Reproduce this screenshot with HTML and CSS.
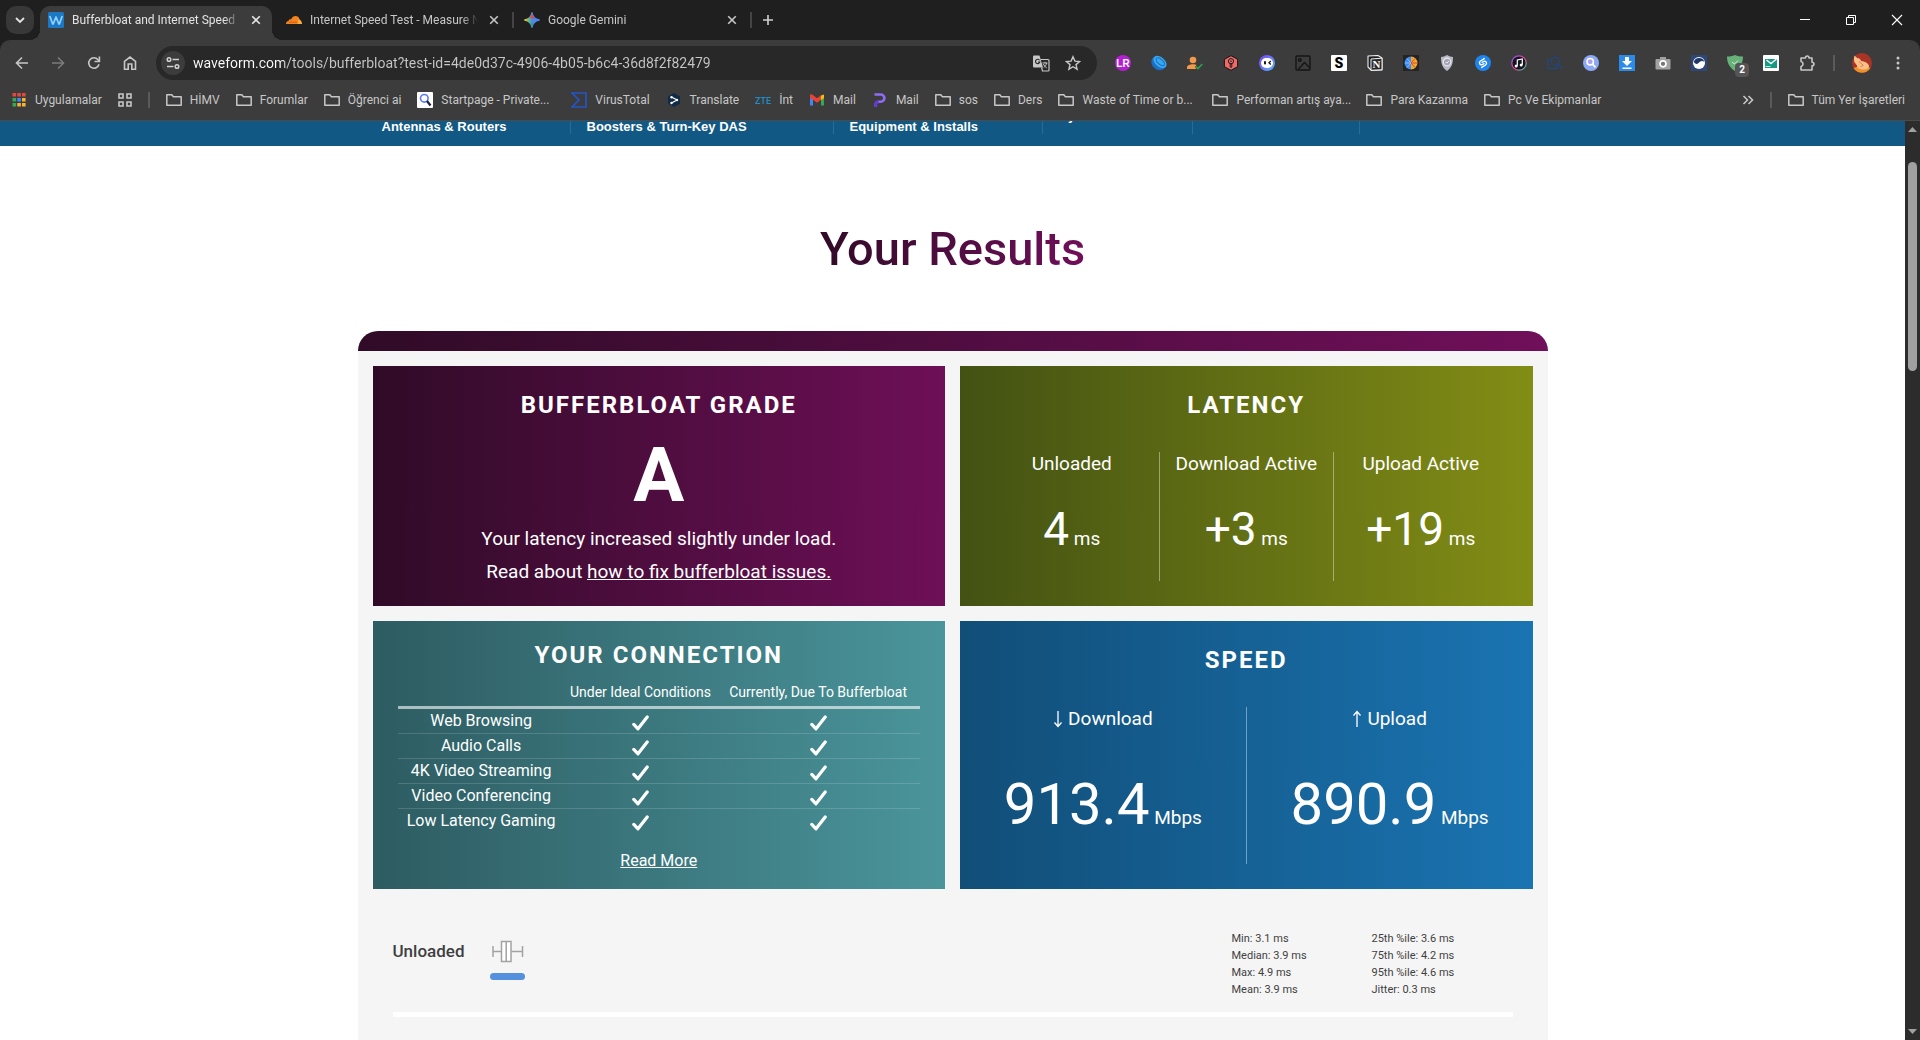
FILE: index.html
```
<!DOCTYPE html>
<html lang="tr">
<head>
<meta charset="utf-8">
<meta name="viewport" content="width=device-width, initial-scale=1">
<title>Bufferbloat and Internet Speed Test</title>
<link rel="stylesheet" href="styles.css">
</head>
<body>
<svg class="symbols" aria-hidden="true">
  <symbol id="folder" viewBox="0 0 16 16"><path d="M.8 13.2V2.8h5l1.6 2h7.8v8.4z" fill="none" stroke="#c7c7c7" stroke-width="1.5" stroke-linejoin="round"/></symbol>
  <symbol id="close" viewBox="0 0 16 16"><path d="M4.2 4.2l7.6 7.6M11.8 4.2l-7.6 7.6" fill="none" stroke="currentColor" stroke-width="1.6"/></symbol>
  <symbol id="check" viewBox="0 0 17 16"><path d="M1.8 9.4l4.2 4.4L15.2 2" fill="none" stroke="#fff" stroke-width="3.2" stroke-linecap="round" stroke-linejoin="round"/></symbol>
</svg>

<header class="browser">
  <div class="tabstrip">
    <button class="tab-search" aria-label="Sekme ara"><svg width="16" height="16" viewBox="0 0 16 16"><path d="M4 6l4 4 4-4" fill="none" stroke="#e3e3e3" stroke-width="1.8"/></svg></button>
    <div class="tab tab-active">
      <svg width="16" height="16" viewBox="0 0 16 16"><rect width="16" height="16" rx="1.5" fill="#1d78c4"/><path d="M1.8 4l2.9 8h.5L8 5l2.9 7h.5l2.8-8" fill="none" stroke="#8fd0ff" stroke-width="1.7" stroke-linejoin="round"/></svg>
      <span class="tab-title">Bufferbloat and Internet Speed</span>
      <button class="tab-close" aria-label="Kapat"><svg width="16" height="16"><use href="#close"/></svg></button>
    </div>
    <span class="tab-sep tab-sep-hidden"></span>
    <div class="tab">
      <svg width="16" height="16" viewBox="0 0 16 16"><path d="M0 12c0-1.7 1-2.8 2.5-2.9C2.700 7.600 4 7 5 7.500 6 5 7.800 4 9.600 4c2.200 0 3.600 1.500 4 3.400L12 12z" fill="#f58220"/><path d="M12.200 7.600c2.200-.2 3.800 1.700 3.800 4.400h-4.600z" fill="#fbad41"/><path d="M3 10.200h8.500" stroke="#b8560c" stroke-width=".7"/></svg>
      <span class="tab-title">Internet Speed Test - Measure N</span>
      <button class="tab-close" aria-label="Kapat"><svg width="16" height="16"><use href="#close"/></svg></button>
    </div>
    <span class="tab-sep"></span>
    <div class="tab">
      <svg width="16" height="16" viewBox="0 0 16 16"><defs><linearGradient id="gem" x1="0" x2="1"><stop offset="0" stop-color="#f6c137"/><stop offset=".3" stop-color="#5fb58a"/><stop offset=".5" stop-color="#4a87ee"/><stop offset="1" stop-color="#4a87f5"/></linearGradient></defs><path d="M8 .8C8.700 5 11 7.300 15.200 8 11 8.700 8.700 11 8 15.200 7.300 11 5 8.700.8 8 5 7.300 7.300 5 8 .8z" fill="url(#gem)" stroke="url(#gem)" stroke-width="1.400" stroke-linejoin="round"/><path d="M8 .8C8.600 4.500 9.700 5.700 11.600 6.900L5.500 5.800C7 4.900 7.600 3.500 8 .8z" fill="#e9453a"/><path d="M6 10.300c1 1 1.600 2.300 2 4.900l1-3.700z" fill="#2fa65a"/></svg>
      <span class="tab-title">Google Gemini</span>
      <button class="tab-close" aria-label="Kapat"><svg width="16" height="16"><use href="#close"/></svg></button>
    </div>
    <span class="tab-sep"></span>
    <button class="new-tab" aria-label="Yeni sekme"><svg width="16" height="16" viewBox="0 0 16 16"><path d="M8 3v10M3 8h10" stroke="#d0d0d0" stroke-width="1.600"/></svg></button>
    <div class="window-controls">
      <button aria-label="Simge durumuna küçült"><svg width="12" height="12" viewBox="0 0 12 12"><path d="M1 5.500h10" stroke="#fff"/></svg></button>
      <button aria-label="Aşağı geri getir"><svg width="12" height="12" viewBox="0 0 12 12" fill="none" stroke="#fff"><path d="M1.500 3.500h7v7h-7zM3.500 3V1.500h7v7H9"/></svg></button>
      <button aria-label="Pencereyi kapat"><svg width="12" height="12" viewBox="0 0 12 12"><path d="M1 1l10 10M11 1L1 11" stroke="#fff" stroke-width="1.100"/></svg></button>
    </div>
  </div>

  <div class="toolbar">
    <button class="nav-button" aria-label="Geri"><svg width="16" height="16" viewBox="0 0 16 16"><path d="M14 8H3M8 2.500L2.500 8 8 13.500" fill="none" stroke="#c7c7c7" stroke-width="1.600"/></svg></button>
    <button class="nav-button" aria-label="İleri"><svg width="16" height="16" viewBox="0 0 16 16"><path d="M2 8h11M8 2.500L13.500 8 8 13.500" fill="none" stroke="#7b7b7b" stroke-width="1.600"/></svg></button>
    <button class="nav-button" aria-label="Yenile"><svg width="16" height="16" viewBox="0 0 16 16"><path d="M13 9.200A5.200 5.200 0 1 1 12 4.700l1 1.300" fill="none" stroke="#c7c7c7" stroke-width="1.600"/><path d="M13.400 1.500v5H8.500" fill="none" stroke="#c7c7c7" stroke-width="1.600"/></svg></button>
    <button class="nav-button" aria-label="Ana sayfa"><svg width="16" height="16" viewBox="0 0 16 16"><path d="M2.500 6.300L8 2l5.500 4.300v7.900h-3.700V9H6.200v5.200H2.500z" fill="none" stroke="#c7c7c7" stroke-width="1.600"/></svg></button>
    <form class="omnibox">
      <button class="site-info" type="button" aria-label="Site bilgileri"><svg width="16" height="16" viewBox="0 0 16 16" fill="none" stroke="#d0d0d0" stroke-width="1.500"><circle cx="4" cy="4.500" r="1.800"/><path d="M7.500 4.500H14M2 11.500h6.500"/><circle cx="12" cy="11.500" r="1.800"/></svg></button>
      <input class="url" type="text" aria-label="Adres" value="waveform.com/tools/bufferbloat?test-id=4de0d37c-4906-4b05-b6c4-36d8f2f82479">
      <button class="omni-action" type="button" aria-label="Bu sayfayı çevir"><svg width="17" height="17" viewBox="0 0 17 17"><path d="M0 1.500Q0 .5 1 .5h5.500L10 12.500H1Q0 12.500 0 11.500z" fill="#c7c7c7"/><path d="M7.500 4.500H15q1 0 1 1V15q0 1-1 1H9.500L8.600 12.500" fill="none" stroke="#c7c7c7" stroke-width="1.200"/><path d="M6.600 5.300A2.200 2.200 0 1 0 6.800 7H5" fill="none" stroke="#282828" stroke-width="1.100"/><path d="M9.500 8h5M12 6.800V8M13.700 8c-.5 2-1.700 3.500-3 4.500M10.300 9c.7 1.600 2 3 3.500 4" stroke="#c7c7c7" fill="none"/></svg></button>
      <button class="omni-action" type="button" aria-label="Yer işareti ekle"><svg width="16" height="16" viewBox="0 0 16 16"><path d="M8 1.800l1.900 4.300 4.700.4-3.600 3.100 1.100 4.600L8 11.700l-4.100 2.500L5 9.600 1.400 6.500l4.700-.4z" fill="none" stroke="#c7c7c7" stroke-width="1.400"/></svg></button>
    </form>
    <div class="extensions">
      <button aria-label="LR"><svg width="16" height="16" viewBox="0 0 16 16"><circle cx="8" cy="8" r="8" fill="#b31fd3"/><text x="8" y="12" text-anchor="middle" class="glyph-lr">LR</text></svg></button>
      <button aria-label="Disk"><svg width="16" height="16" viewBox="0 0 16 16"><ellipse cx="7.800" cy="8.600" rx="7.800" ry="6.200" transform="rotate(42 8 8)" fill="#1c6fc4"/><ellipse cx="9" cy="7" rx="7.600" ry="4.800" transform="rotate(42 9 7)" fill="#38a8f0"/><ellipse cx="9.300" cy="6.800" rx="5" ry="2.500" transform="rotate(42 9.300 6.800)" fill="none" stroke="#1c6fc4"/></svg></button>
      <button aria-label="Kişi"><svg width="16" height="16" viewBox="0 0 16 16"><circle cx="6" cy="5" r="3.300" fill="#f29a4a"/><path d="M0 14v-1.500C0 10.500 3 9.300 6 9.300c1.500 0 3 .3 3.500.7L8 12l1.500 2z" fill="#f29a4a"/><path d="M9 11.500l2 2 4.300-4.500" fill="none" stroke="#2ea04e" stroke-width="1.600"/></svg></button>
      <button aria-label="Konum"><svg width="16" height="16" viewBox="0 0 16 16"><path d="M8 .7l6.600 3.600v7.400L8 15.300 1.400 11.700V4.300z" fill="#ef6a64" stroke="#16161d"/><circle cx="8" cy="6.200" r="2.600" fill="none" stroke="#16161d"/><circle cx="8" cy="6.200" r=".8" fill="#16161d"/><path d="M7.200 9h1.600v3.200H7.200z" fill="#ef6a64" stroke="#16161d" stroke-width=".9"/></svg></button>
      <button aria-label="Robot"><svg width="16" height="16" viewBox="0 0 16 16"><defs><linearGradient id="bot" x1="0" x2="1" y1="0" y2="1"><stop offset="0" stop-color="#7b3ff2"/><stop offset="1" stop-color="#5bb8ff"/></linearGradient></defs><circle cx="8" cy="8" r="8" fill="url(#bot)"/><rect x="2" y="3" width="12" height="10" rx="5" fill="#fff"/><rect x="5" y="6" width="2" height="3.500" rx="1" fill="#111"/><path d="M11.800 6L10 7.800l1.800 1.700" fill="none" stroke="#111" stroke-width="1.300"/></svg></button>
      <button aria-label="Resim"><svg width="16" height="16" viewBox="0 0 16 16" fill="none" stroke="#151515" stroke-width="1.400"><rect x="1" y="1" width="14" height="14" rx="1"/><circle cx="4.800" cy="5" r="1.300"/><path d="M3.500 14l6-6.500 5 5"/></svg></button>
      <button aria-label="S"><svg width="16" height="16" viewBox="0 0 16 16"><rect width="16" height="16" rx="1" fill="#fff"/><text x="8" y="13" text-anchor="middle" class="glyph-s">S</text></svg></button>
      <button aria-label="Notion"><svg width="16" height="16" viewBox="0 0 16 16"><path d="M1 1l10-.5L15 3v12l-10.500.5L1 12z" fill="#202020" stroke="#f1f1f1" stroke-width="1.100" stroke-linejoin="round"/><path d="M4 4l11-.8v11.500l-11 .6z" fill="#2a2a2a" stroke="#f1f1f1"/><text x="9.500" y="13" text-anchor="middle" class="glyph-n">N</text></svg></button>
      <button aria-label="Renkler"><svg width="16" height="16" viewBox="0 0 16 16"><rect width="16" height="16" fill="#242424"/><path d="M8 1.500a6.500 6.500 0 0 0 0 13z" fill="#3b8cf0"/><path d="M8 1.500a6.500 6.500 0 0 1 0 13z" fill="#f3a72c"/><path d="M2 8h6M4 3.500l4 4.500-4 4.500" fill="none" stroke="#9bd0ff" stroke-width=".8"/><path d="M8 8h6M12 3.500L8 8l4 4.500" fill="none" stroke="#e04038" stroke-width=".9"/></svg></button>
      <button aria-label="Kalkan"><svg width="16" height="16" viewBox="0 0 16 16"><path d="M8 0c2 1.400 4 1.800 6 2 0 7-1.600 11-6 14C3.600 13 2 9 2 2c2-.2 4-.6 6-2z" fill="#b9bac6"/><circle cx="8" cy="7" r="3.800" fill="#a4a6b4" stroke="#e8e8ef" stroke-width="1.200"/><path d="M6.500 7l1.200 1.200L9.800 6" fill="none" stroke="#efefff"/></svg></button>
      <button aria-label="Shazam"><svg width="16" height="16" viewBox="0 0 16 16"><circle cx="8" cy="8" r="8" fill="#1f85ee"/><path d="M9.300 3.600L5.500 6c-2.200 1.400-.6 4.400 1.600 3.600L9 8.700M6.700 12.400l3.800-2.400c2.200-1.400.6-4.400-1.600-3.600L7 7.300" fill="none" stroke="#fff" stroke-width="1.400" stroke-linecap="round"/></svg></button>
      <button aria-label="Müzik"><svg width="16" height="16" viewBox="0 0 16 16"><defs><linearGradient id="ring" x1="0" x2="1" y1="0" y2="1"><stop offset="0" stop-color="#8a5cf0"/><stop offset=".5" stop-color="#e43d96"/><stop offset="1" stop-color="#38d0a0"/></linearGradient></defs><circle cx="8" cy="8" r="7.200" fill="#15151f" stroke="url(#ring)" stroke-width="1.300"/><path d="M6.300 10.800V5l5-1v5.800" fill="none" stroke="#fff" stroke-width="1.200"/><circle cx="5.200" cy="11" r="1.500" fill="#fff"/><circle cx="10.200" cy="10" r="1.500" fill="#fff"/></svg></button>
      <button aria-label="Arama"><svg width="16" height="16" viewBox="0 0 16 16" fill="none" stroke="#1f4784" stroke-width="1.200"><path d="M5 5H.8v8.500h9.500V11"/><circle cx="8.500" cy="6.300" r="4"/><path d="M11.300 9l4.200 4.500"/></svg></button>
      <button aria-label="Büyüteç"><svg width="16" height="16" viewBox="0 0 16 16"><circle cx="8" cy="8" r="8" fill="#8ca9f5"/><circle cx="7.200" cy="6.800" r="3.200" fill="#a9a4f4" stroke="#fff" stroke-width="1.500"/><path d="M9.500 9.200l3 3.200" stroke="#fff" stroke-width="1.700"/></svg></button>
      <button aria-label="İndir"><svg width="16" height="16" viewBox="0 0 16 16"><rect width="16" height="16" fill="#2a8ce8"/><path d="M6 2h4v4h3l-5 5-5-5h3zM3.500 12.500h9V14h-9z" fill="#fff"/></svg></button>
      <button aria-label="Kamera"><svg width="16" height="16" viewBox="0 0 16 16"><path d="M5 2h6v2h3.500q1 0 1 1v8.500q0 1-1 1h-13q-1 0-1-1V5q0-1 1-1H5z" fill="#a2a2a2"/><circle cx="8" cy="8.800" r="3" fill="#777" stroke="#fff" stroke-width="1.700"/></svg></button>
      <button aria-label="Dalga"><svg width="16" height="16" viewBox="0 0 16 16"><rect width="16" height="16" fill="#2c4778"/><circle cx="8" cy="8" r="6" fill="#fff"/><path d="M2.800 7C5 10 7 9 8 7.500S11.500 5 13.400 7A5.500 5.500 0 0 0 2.800 7z" fill="#1e3767"/></svg></button>
      <button class="badged" aria-label="Koruma"><svg width="16" height="16" viewBox="0 0 16 16"><path d="M8 0c2.500 1.200 5 1.500 8 1.500C16 8 13.500 12.500 8 16 2.500 12.500 0 8 0 1.500 3 1.500 5.500 1.200 8 0z" fill="#67b279"/><path d="M5 7l2.500 2L11 5.500" fill="none" stroke="#d5eedb"/></svg><span class="badge">2</span></button>
      <button aria-label="Posta"><svg width="16" height="16" viewBox="0 0 16 16"><rect width="16" height="16" rx="1" fill="#fff"/><rect x="2" y="4" width="12" height="9" fill="#189a82"/><path d="M3.500 5L8 8.500 13.500 4" fill="none" stroke="#fff" stroke-width="1.400"/><path d="M2.500 11.500h5" stroke="#bfeadf"/></svg></button>
      <button aria-label="Uzantılar"><svg width="17" height="17" viewBox="0 0 17 17"><path d="M2 3h4.500c0-2.600 3.500-2.600 3.500 0H13v4.300c2.600 0 2.600 3.500 0 3.500V15H2v-3.500c2.700-.6 2.700-4.400 0-5z" fill="none" stroke="#c7c7c7" stroke-width="1.600" stroke-linejoin="round"/></svg></button>
    </div>
    <span class="divider"></span>
    <button class="profile" aria-label="Profil"><svg width="20" height="20" viewBox="0 0 20 20"><circle cx="10" cy="10" r="10" fill="#a93425"/><path d="M1.500 15a10 10 0 0 0 17 0l-8-3z" fill="#f0902a"/><path d="M2.500 2.500l2.600 2.600c2 0 3.500 1 4 2.900 3.500.3 7.400 2 7.900 5 .3 2.200-2 3.500-5 3.500-4 0-7-1-7-4L2.300 9C1.800 6.500 2 4.500 2.500 2.500z" fill="#fbc08a"/><path d="M7 8.500l4 3.500M8.500 13.500l3-1" stroke="#d9804c"/></svg></button>
    <button class="menu" aria-label="Menü"><svg width="16" height="16" viewBox="0 0 16 16" fill="#c7c7c7"><circle cx="8" cy="3" r="1.500"/><circle cx="8" cy="8" r="1.500"/><circle cx="8" cy="13" r="1.500"/></svg></button>
  </div>

  <nav class="bookmarks" aria-label="Yer işaretleri">
    <button><svg width="16" height="16" viewBox="0 0 16 16"><g fill="#e2483d"><path d="M1.500 1h3.600v3.600H1.500zM6.300 1h3.600v3.600H6.300zM11 1h3.600v3.600H11z"/></g><path d="M1.500 6h3.600v3.600H1.500zM1.500 11h3.600v3.600H1.500z" fill="#35a853"/><path d="M6.300 6h3.600v3.600H6.300z" fill="#4285f4"/><path d="M11 6h3.600v3.600H11zM6.300 11h3.600v3.600H6.300zM11 11h3.600v3.600H11z" fill="#f4b42c"/></svg>Uygulamalar</button>
    <button aria-label="Sekme grupları"><svg width="14" height="14" viewBox="0 0 14 14" fill="none" stroke="#c7c7c7" stroke-width="1.600"><path d="M1 1h4v4H1zM9 1h4v4H9zM1 9h4v4H1zM9 9h4v4H9z"/></svg></button>
    <span class="divider"></span>
    <button><svg width="16" height="16"><use href="#folder"/></svg>HİMV</button>
    <button><svg width="16" height="16"><use href="#folder"/></svg>Forumlar</button>
    <button><svg width="16" height="16"><use href="#folder"/></svg>Öğrenci ai</button>
    <button class="wide"><svg width="16" height="16" viewBox="0 0 16 16"><rect width="16" height="16" rx="1" fill="#fff"/><circle cx="7.300" cy="6.300" r="3.800" fill="none" stroke="#5b7bf0" stroke-width="1.600"/><path d="M10 9l3.500 4.500" stroke="#1a2140" stroke-width="2.200"/></svg>Startpage - Private...</button>
    <button><svg width="16" height="16" viewBox="0 0 16 16"><path d="M1 1h14v14H1l7-7z" fill="none" stroke="#2453c9" stroke-width="1.700"/></svg>VirusTotal</button>
    <button><svg width="16" height="16" viewBox="0 0 16 16"><path d="M8 1l6 3.500v7L8 15l-6-3.500v-7z" fill="#0f2b46"/><path d="M5.500 5L11 8l-5.500 3" fill="none" stroke="#fff" stroke-width="1.200"/><circle cx="5.500" cy="5.200" r="1.200" fill="#fff"/><circle cx="11" cy="8" r="1.200" fill="#fff"/><circle cx="5.500" cy="11" r="1.200" fill="#fff"/></svg>Translate</button>
    <button><svg width="16" height="16" viewBox="0 0 16 16"><text x="8" y="12" text-anchor="middle" class="glyph-zte">ZTE</text></svg>İnt</button>
    <button><svg width="16" height="16" viewBox="0 0 16 16"><path d="M1 4v9.500h3V7z" fill="#4285f4"/><path d="M15 4v9.500h-3V7z" fill="#34a853"/><path d="M12 3.500L15 2.500V6l-3 2.300z" fill="#fbbc04"/><path d="M1 6V3.500C1 2 2.500 2 3.500 2.800L8 6.200l4-3v4.600l-4 3-4-3z" fill="#ea4335"/></svg>Mail</button>
    <button><svg width="16" height="16" viewBox="0 0 16 16"><path d="M2.500 2.500h6.300a3.600 3.600 0 0 1 0 7.200H6.500q-2.700 0-2.700 2.600V15" fill="none" stroke="#8f6cf5" stroke-width="2.600"/><path d="M3.800 15v-2.700Q3.800 9.700 6.500 9.700" fill="none" stroke="#6436e0" stroke-width="2.600"/></svg>Mail</button>
    <button><svg width="16" height="16"><use href="#folder"/></svg>sos</button>
    <button><svg width="16" height="16"><use href="#folder"/></svg>Ders</button>
    <button class="wide"><svg width="16" height="16"><use href="#folder"/></svg>Waste of Time or b...</button>
    <button class="wide"><svg width="16" height="16"><use href="#folder"/></svg>Performan artış aya...</button>
    <button><svg width="16" height="16"><use href="#folder"/></svg>Para Kazanma</button>
    <button><svg width="16" height="16"><use href="#folder"/></svg>Pc Ve Ekipmanlar</button>
    <div class="bookmarks-end">
      <button aria-label="Diğer yer işaretleri"><svg width="12" height="12" viewBox="0 0 12 12"><path d="M1.500 2l4 4-4 4M6.500 2l4 4-4 4" fill="none" stroke="#c7c7c7" stroke-width="1.600"/></svg></button>
      <span class="divider"></span>
      <button><svg width="16" height="16"><use href="#folder"/></svg>Tüm Yer İşaretleri</button>
    </div>
  </nav>
</header>

<div class="viewport" lang="en">
  <div class="page">
    <nav class="site-nav">
      <ul>
        <li class="c1"><a href="#">Antennas &amp; Routers</a></li>
        <li class="c2"><a href="#">Boosters &amp; Turn-Key DAS</a></li>
        <li class="c3"><a href="#">Equipment &amp; Installs</a></li>
        <li class="c4"><a href="#">By</a></li>
        <li class="c5"></li>
        <li class="c6"></li>
      </ul>
    </nav>

    <main>
      <h1><span>Your Results</span></h1>

      <section class="results">
        <div class="cards">
          <article class="card card-grade">
            <h2>Bufferbloat Grade</h2>
            <p class="grade">A</p>
            <p class="summary">Your latency increased slightly under load.<br>Read about <a href="#">how to fix bufferbloat issues.</a></p>
          </article>

          <article class="card card-latency">
            <h2>Latency</h2>
            <div class="metrics">
              <div><h3>Unloaded</h3><p><strong>4</strong> ms</p></div>
              <div><h3>Download Active</h3><p><strong>+3</strong> ms</p></div>
              <div><h3>Upload Active</h3><p><strong>+19</strong> ms</p></div>
            </div>
          </article>

          <article class="card card-connection">
            <h2>Your Connection</h2>
            <table>
              <thead><tr><td></td><th scope="col">Under Ideal Conditions</th><th scope="col">Currently, Due To Bufferbloat</th></tr></thead>
              <tbody>
                <tr><th scope="row">Web Browsing</th><td><svg width="17" height="16"><use href="#check"/></svg></td><td><svg width="17" height="16"><use href="#check"/></svg></td></tr>
                <tr><th scope="row">Audio Calls</th><td><svg width="17" height="16"><use href="#check"/></svg></td><td><svg width="17" height="16"><use href="#check"/></svg></td></tr>
                <tr><th scope="row">4K Video Streaming</th><td><svg width="17" height="16"><use href="#check"/></svg></td><td><svg width="17" height="16"><use href="#check"/></svg></td></tr>
                <tr><th scope="row">Video Conferencing</th><td><svg width="17" height="16"><use href="#check"/></svg></td><td><svg width="17" height="16"><use href="#check"/></svg></td></tr>
                <tr><th scope="row">Low Latency Gaming</th><td><svg width="17" height="16"><use href="#check"/></svg></td><td><svg width="17" height="16"><use href="#check"/></svg></td></tr>
              </tbody>
            </table>
            <a class="read-more" href="#">Read More</a>
          </article>

          <article class="card card-speed">
            <h2>Speed</h2>
            <div class="metrics">
              <div><h3><svg width="10" height="18" viewBox="0 0 10 18"><path d="M5 1v15M1.500 12.500L5 16.500l3.500-4" fill="none" stroke="#fff" stroke-width="1.300"/></svg>Download</h3><p><strong>913.4</strong> Mbps</p></div>
              <div><h3><svg width="10" height="18" viewBox="0 0 10 18"><path d="M5 17V2M1.500 5.500L5 1.500l3.500 4" fill="none" stroke="#fff" stroke-width="1.300"/></svg>Upload</h3><p><strong>890.9</strong> Mbps</p></div>
            </div>
          </article>
        </div>

        <section class="distribution">
          <h3>Unloaded</h3>
          <svg width="36" height="44" viewBox="0 0 36 44"><g fill="none" stroke="#a2a2a2" stroke-width="1.500"><path d="M3 8v11M3 13.500h8M32.500 8v11M32.500 13.500H21.500"/><path d="M11.500 3.500h9.500v20h-9.500zM16.200 3.500v20" fill="#fff"/></g><rect y="35" width="35" height="7" rx="3.500" fill="#5490dd"/></svg>
          <ul>
            <li>Min: 3.1 ms</li>
            <li>Median: 3.9 ms</li>
            <li>Max: 4.9 ms</li>
            <li>Mean: 3.9 ms</li>
          </ul>
          <ul>
            <li>25th %ile: 3.6 ms</li>
            <li>75th %ile: 4.2 ms</li>
            <li>95th %ile: 4.6 ms</li>
            <li>Jitter: 0.3 ms</li>
          </ul>
        </section>
      </section>
    </main>
  </div>

  <div class="scrollbar" aria-hidden="true">
    <svg width="9" height="5" viewBox="0 0 9 5"><path d="M0 5L4.500 0 9 5z" fill="#a0a0a0"/></svg>
    <div class="track"><div class="thumb"></div></div>
    <svg width="9" height="5" viewBox="0 0 9 5"><path d="M0 0l4.500 5L9 0z" fill="#a0a0a0"/></svg>
  </div>
</div>
</body>
</html>
```
FILE: styles.css
```
* { box-sizing: border-box; }

body {
  margin: 0;
  height: 100vh;
  display: flex;
  flex-direction: column;
  overflow: hidden;
  background: #fff;
  font-family: Roboto, "Open Sans", sans-serif;
}

h1, h2, h3, p, ul { margin: 0; padding: 0; }
ul { list-style: none; }
button {
  padding: 0;
  border: 0;
  background: none;
  color: inherit;
  font: inherit;
  display: flex;
  align-items: center;
  justify-content: center;
}
svg { flex: none; }
.symbols { position: absolute; width: 0; height: 0; }

/* Browser frame */
.browser {
  flex: none;
  background: #1f1f1f;
  color: #c7c7c7;
  font-size: 12px;
  line-height: 16px;
}

.tabstrip {
  display: flex;
  align-items: flex-end;
  height: 40px;
  padding-left: 6px;
}
.tab-search {
  width: 28px;
  height: 28px;
  margin: 0 6px 6px 0;
  border-radius: 10px;
  background: #383838;
}
.tab {
  position: relative;
  display: flex;
  align-items: center;
  gap: 8px;
  width: 232px;
  height: 34px;
  padding: 0 8px 6px;
}
.tab-active {
  border-radius: 10px 10px 0 0;
  background: #3c3c3c;
  color: #e3e3e3;
}
.tab-active::before,
.tab-active::after {
  content: "";
  position: absolute;
  bottom: 0;
  width: 10px;
  height: 10px;
}
.tab-active::before { left: -10px; background: radial-gradient(circle at 0 0, transparent 10px, #3c3c3c 10px); }
.tab-active::after { right: -10px; background: radial-gradient(circle at 100% 0, transparent 10px, #3c3c3c 10px); }
.tab-title {
  flex: 1;
  min-width: 0;
  overflow: hidden;
  white-space: nowrap;
  mask-image: linear-gradient(to left, transparent, #000 16px);
}
.tab-close { width: 16px; height: 16px; }
.tab-sep {
  width: 2px;
  height: 16px;
  margin: 0 2px 12px;
  background: #444;
}
.tab-sep-hidden { background: none; }
.new-tab { width: 28px; height: 28px; margin: 0 0 6px; }
.window-controls { display: flex; margin-left: auto; align-self: stretch; }
.window-controls button { width: 46px; }

.toolbar {
  display: flex;
  align-items: center;
  height: 40px;
  padding: 6px 14px 0 4px;
  border-radius: 10px 10px 0 0;
  background: #3c3c3c;
}
.nav-button { width: 36px; height: 34px; }
.omnibox {
  flex: 1;
  display: flex;
  align-items: center;
  height: 34px;
  margin: 0 18px 0 8px;
  padding: 0 16px 0 5px;
  border-radius: 17px;
  background: #282828;
}
.site-info { width: 24px; height: 24px; border-radius: 12px; background: #3c3c3c; }
.url {
  flex: 1;
  min-width: 0;
  height: 24px;
  margin-left: 8px;
  padding: 0;
  border: 0;
  outline: 0;
  font: 14px/24px Roboto, "Open Sans", sans-serif;
  color: transparent;
  background: linear-gradient(to right, #fff 91px, #c7c7c7 91px);
  background-clip: text;
  -webkit-background-clip: text;
}
.omni-action { width: 16px; height: 24px; margin-left: 16px; }
.extensions { display: flex; gap: 20px; }
.extensions button { width: 16px; height: 16px; }
.badged { position: relative; }
.badge {
  position: absolute;
  left: 8px;
  top: 8px;
  width: 14px;
  height: 14px;
  border-radius: 4px;
  background: #555;
  color: #fff;
  font-size: 10px;
  font-weight: 700;
  line-height: 14px;
}
.divider { width: 2px; height: 16px; background: #5a5a5a; }
.toolbar .divider { margin: 0 17px 0 18px; }
.menu { width: 16px; height: 24px; margin-left: 18px; }

.glyph-lr { font: 700 10px "Liberation Sans", sans-serif; fill: #fff; }
.glyph-s { font: 900 14px Roboto, sans-serif; fill: #000; }
.glyph-n { font: 700 11px "Liberation Serif", serif; fill: #fff; }
.glyph-zte { font: 500 9px Roboto, sans-serif; fill: #1e8fc8; }

.bookmarks {
  display: flex;
  align-items: center;
  gap: 16px;
  height: 41px;
  padding: 0 15px 1px 11px;
  border-bottom: 1px solid #4a4a4a;
  background: #3c3c3c;
  white-space: nowrap;
}
.bookmarks button { flex: none; gap: 8px; height: 28px; }
.bookmarks .wide { width: 138px; justify-content: flex-start; }
.bookmarks .divider { flex: none; }
.bookmarks-end { display: flex; align-items: center; gap: 16px; margin-left: auto; }

/* Page area */
.viewport { flex: 1; min-height: 0; display: flex; }
.page { flex: 1; min-width: 0; overflow: hidden; }

.site-nav {
  display: flex;
  align-items: flex-end;
  height: 25px;
  padding-bottom: 12px;
  overflow: hidden;
  background: #125885;
}
.site-nav ul { display: flex; flex: none; width: 1176px; margin: 0 auto; }
.site-nav li {
  display: flex;
  align-items: flex-end;
  height: 36px;
  padding-left: 16px;
  border-left: 1px solid #2a6c98;
}
.site-nav li:first-child { border-left-color: transparent; }
.site-nav a {
  color: #fff;
  font: 700 13px/14px "Liberation Sans", Arial, sans-serif;
  text-decoration: none;
  white-space: nowrap;
}
.site-nav .c4 { align-items: center; }
.c1 { width: 205px; }
.c2 { width: 263px; }
.c3 { width: 209px; }
.c4 { width: 150px; }
.c5 { width: 167px; }
.c6 { width: 182px; }

main { width: 1190px; max-width: 100%; margin: 0 auto; }

h1 {
  margin: 75px 0 54px;
  text-align: center;
  font-size: 47px;
  line-height: 56px;
  font-weight: 500;
}
h1 span {
  color: transparent;
  background: linear-gradient(to right, #300b27, #700f5a);
  background-clip: text;
  -webkit-background-clip: text;
}

.results {
  min-height: 100vh;
  border-radius: 20px 20px 0 0;
  background: #f5f5f5;
  overflow: hidden;
}
.results::before {
  content: "";
  display: block;
  height: 20px;
  background: linear-gradient(to right, #300b27, #700f5a);
}

.cards {
  display: grid;
  grid-template-columns: 1fr 1fr;
  grid-template-rows: 240px 268px;
  gap: 15px;
  padding: 15px;
}
.card {
  padding-top: 23px;
  color: #fff;
  text-align: center;
  font-size: 19px;
}
.card-grade { background: linear-gradient(to right, #300b27, #6e0f57); }
.card-latency { background: linear-gradient(to right, #435213, #828d15); }
.card-connection { padding: 18px 25px 0; background: linear-gradient(to right, #2d5c62, #4a959b); }
.card-speed { background: linear-gradient(to right, #114e78, #1a74b2); }

.card h2 {
  font-size: 24px;
  line-height: 32px;
  font-weight: 700;
  letter-spacing: 2px;
  text-transform: uppercase;
}
.card a { color: #fff; }
.grade { margin: 16px 0 9px; font-size: 76px; line-height: 76px; font-weight: 700; }
.summary { line-height: 33px; }

.metrics { display: flex; margin-top: 31px; }
.metrics > div { flex: 1; }
.metrics > div + div { border-left: 1px solid rgba(255, 255, 255, .4); }
.metrics h3 {
  display: flex;
  align-items: center;
  justify-content: center;
  gap: 5px;
  font-size: 19px;
  line-height: 24px;
  font-weight: 400;
}
.metrics strong { font-weight: 400; }
.card-latency .metrics { height: 129px; padding: 0 25px; }
.card-latency p { margin-top: 25px; line-height: 56px; }
.card-latency strong { font-size: 46px; }
.card-speed .metrics { height: 157px; }
.card-speed p { margin-top: 37px; line-height: 72px; }
.card-speed strong { font-size: 58px; }

table { width: 100%; margin-top: 12px; border-collapse: separate; border-spacing: 0; table-layout: fixed; }
th, td { padding: 0; font-weight: 400; }
thead td { width: 32%; }
thead th { width: 39%; font-size: 14px; line-height: 18px; }
thead th:nth-child(2) { width: 29%; }
thead th, thead td { padding-bottom: 5px; border-bottom: 3px solid rgba(255, 255, 255, .6); }
tbody th, tbody td { height: 25px; border-bottom: 1px solid rgba(255, 255, 255, .15); font-size: 16px; line-height: 24px; }
tbody td { padding-top: 4px; }
tbody tr:last-child > * { border-bottom-color: transparent; }
tbody svg { display: block; margin: 0 auto; }
.read-more { display: block; margin-top: 15px; font-size: 16px; line-height: 24px; }

.distribution {
  display: grid;
  grid-template-columns: 97px 1fr 140px 141px;
  margin: 26px 35px 0;
  padding-bottom: 14px;
  border-bottom: 5px solid #fff;
  color: #3f3f3f;
}
.distribution h3 { margin-top: 9px; font-size: 17px; line-height: 24px; font-weight: 500; }
.distribution svg { margin-top: 8px; }
.distribution li { font-size: 11px; line-height: 17px; }

.scrollbar {
  flex: none;
  display: flex;
  flex-direction: column;
  align-items: center;
  width: 15px;
  padding: 6px 0;
  background: #2c2c2c;
}
.track { flex: 1; width: 9px; padding: 30px 0; }
.thumb { height: 25%; border-radius: 5px; background: #a0a0a0; }
```
